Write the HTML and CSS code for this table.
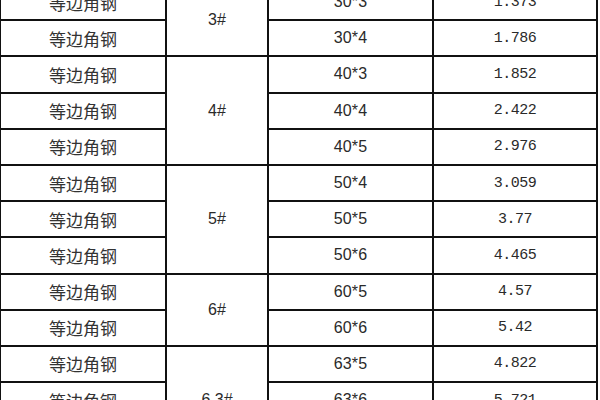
FILE: index.html
```html
<!DOCTYPE html>
<html lang="zh">
<head>
<meta charset="utf-8">
<link rel="stylesheet" href="styles.css">
</head>
<body>
<table class="steel">
<colgroup>
<col class="c-name"><col class="c-no"><col class="c-spec"><col class="c-wt">
</colgroup>
<tbody>
<tr><td class="name">等边角钢</td><td class="no" rowspan="2">3#</td><td class="spec">30*3</td><td class="wt">1.373</td></tr>
<tr><td class="name">等边角钢</td><td class="spec">30*4</td><td class="wt">1.786</td></tr>
<tr><td class="name">等边角钢</td><td class="no" rowspan="3">4#</td><td class="spec">40*3</td><td class="wt">1.852</td></tr>
<tr><td class="name">等边角钢</td><td class="spec">40*4</td><td class="wt">2.422</td></tr>
<tr><td class="name">等边角钢</td><td class="spec">40*5</td><td class="wt">2.976</td></tr>
<tr><td class="name">等边角钢</td><td class="no" rowspan="3">5#</td><td class="spec">50*4</td><td class="wt">3.059</td></tr>
<tr><td class="name">等边角钢</td><td class="spec">50*5</td><td class="wt">3.77</td></tr>
<tr><td class="name">等边角钢</td><td class="spec">50*6</td><td class="wt">4.465</td></tr>
<tr><td class="name">等边角钢</td><td class="no" rowspan="2">6#</td><td class="spec">60*5</td><td class="wt">4.57</td></tr>
<tr><td class="name">等边角钢</td><td class="spec">60*6</td><td class="wt">5.42</td></tr>
<tr><td class="name">等边角钢</td><td class="no" rowspan="3">6.3#</td><td class="spec">63*5</td><td class="wt">4.822</td></tr>
<tr><td class="name">等边角钢</td><td class="spec">63*6</td><td class="wt">5.721</td></tr>
<tr><td class="name">等边角钢</td><td class="spec">63*8</td><td class="wt">7.469</td></tr>
</tbody>
</table>
</body>
</html>
```
FILE: styles.css
```css
html, body {
  margin: 0;
  padding: 0;
  background: #ffffff;
  overflow: hidden;
}
.steel {
  border-collapse: collapse;
  table-layout: fixed;
  width: 599px;
  margin-top: -17px;
  margin-left: -1px;
  color: #2a2a2a;
}
.c-name { width: 166px; }
.c-no { width: 102px; }
.c-spec { width: 165px; }
.c-wt { width: 164px; }
.steel td {
  border: 2px solid #111111;
  height: 34.2px;
  padding: 0;
  text-align: center;
  vertical-align: middle;
  white-space: nowrap;
}
.name {
  font-family: "Noto Sans CJK SC", sans-serif;
  font-size: 17px;
  color: #333333;
}
.no {
  font-family: "Liberation Sans", sans-serif;
  font-size: 16px;
}
.spec {
  font-family: "Liberation Sans", sans-serif;
  font-size: 16px;
  letter-spacing: 0.2px;
}
.wt {
  font-family: "Liberation Mono", monospace;
  font-size: 15px;
  letter-spacing: -0.5px;
}
```
